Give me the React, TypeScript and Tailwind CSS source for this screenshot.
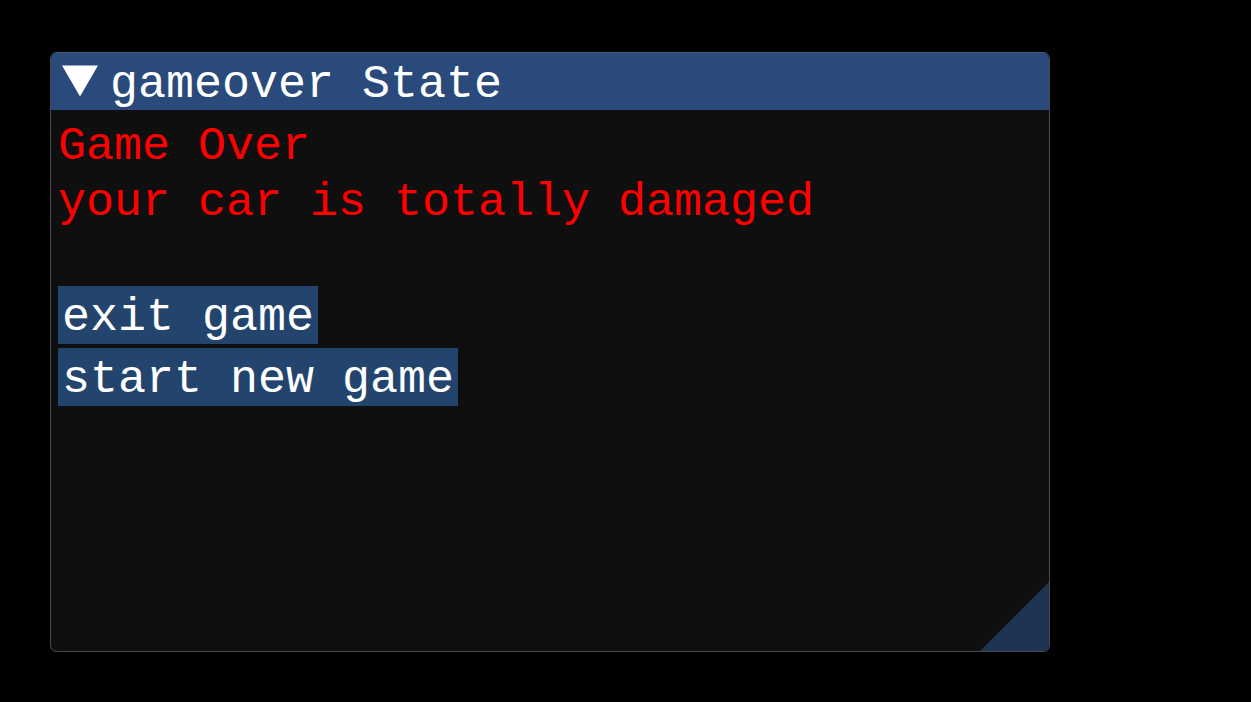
import React from "react";

const lines = ["Game Over", "your car is totally damaged", ""];
const buttons = ["exit game", "start new game"];

const DownArrow = () => (
  <svg width={52} height={52} viewBox="0 0 52 52" className="shrink-0">
    <polygon points="8,10.4 44,10.4 26,41.6" fill="#ffffff" />
  </svg>
);

export default function App() {
  return (
    <div className="min-h-screen w-full bg-black pl-[50px] pt-[52px] font-['Liberation_Mono',monospace] text-[46.67px]">
      <div className="relative w-[1000px] h-[600px] rounded-[7px] border border-[#494952] border-t-[#4a5b7c] bg-[#0f0f0f] overflow-hidden flex flex-col">
        {/* title bar */}
        <div className="flex items-start h-[57px] shrink-0 bg-[#294a7a] pl-[3px] pt-[2px]">
          <DownArrow />
          <span className="ml-[4px] h-[52px] leading-[59px] text-white whitespace-pre">gameover State</span>
        </div>

        {/* content */}
        <div className="flex flex-col items-start gap-[4px] pl-[7px] pt-[8px]">
          {lines.map((t, i) => (
            <div key={i} className="h-[52px] leading-[57px] text-[#ff0000] whitespace-pre">
              {t}
            </div>
          ))}
          {buttons.map((b) => (
            <button
              key={b}
              className="h-[58px] px-[4px] pt-[5px] leading-[52px] bg-[#23456d] text-white whitespace-pre text-left"
            >
              {b}
            </button>
          ))}
        </div>

        {/* resize grip */}
        <div className="absolute right-0 bottom-0 w-[69px] h-[69px] bg-[#1e3452] [clip-path:polygon(100%_0,100%_100%,0_100%)]" />
      </div>
    </div>
  );
}
